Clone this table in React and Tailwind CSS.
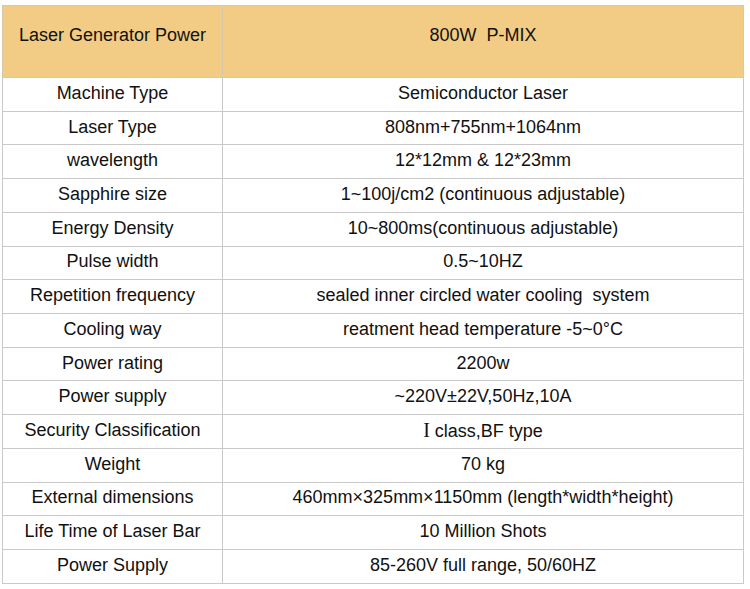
const rows = [
  ['Machine Type', 'Semiconductor Laser'],
  ['Laser Type', '808nm+755nm+1064nm'],
  ['wavelength', '12*12mm & 12*23mm'],
  ['Sapphire size', '1~100j/cm2 (continuous adjustable)'],
  ['Energy Density', '10~800ms(continuous adjustable)'],
  ['Pulse width', '0.5~10HZ'],
  ['Repetition frequency', 'sealed inner circled water cooling\u00a0 system'],
  ['Cooling way', 'reatment head temperature -5~0°C'],
  ['Power rating', '2200w'],
  ['Power supply', '~220V±22V,50Hz,10A'],
  ['Security Classification', null],
  ['Weight', '70 kg'],
  ['External dimensions', '460mm×325mm×1150mm (length*width*height)'],
  ['Life Time of Laser Bar', '10 Million Shots'],
  ['Power Supply', '85-260V full range, 50/60HZ'],
];

export default function App() {
  return (
    <div className="w-[750px] h-[589px] bg-white pt-[5px] pl-[2px]" style={{ fontFamily: '"Liberation Sans", Arial, sans-serif' }}>
      <table className="w-[742px] border-collapse text-[18px] leading-[20px] text-[#111]">
        <colgroup>
          <col className="w-[220px]" />
          <col />
        </colgroup>
        <thead>
          <tr className="h-[72px] bg-[#f2cc85]">
            <th className="border border-[#d6c8a8] align-top pt-[19px] pl-[16px] text-left font-normal">Laser Generator Power</th>
            <th className="border border-[#d6c8a8] align-top pt-[19px] text-center font-normal">800W&nbsp; P-MIX</th>
          </tr>
        </thead>
        <tbody>
          {rows.map(([k, v]) => (
            <tr key={k} className="h-[33.73px]">
              <td className="border border-[#c9c9c9] text-center p-0 pb-[3px]">{k}</td>
              <td className="border border-[#c9c9c9] text-center p-0 pb-[3px]">
                {v ?? (
                  <>
                    <span className="text-[20px]" style={{ fontFamily: '"Liberation Serif", serif' }}>I</span> class,BF type
                  </>
                )}
              </td>
            </tr>
          ))}
        </tbody>
      </table>
    </div>
  );
}
